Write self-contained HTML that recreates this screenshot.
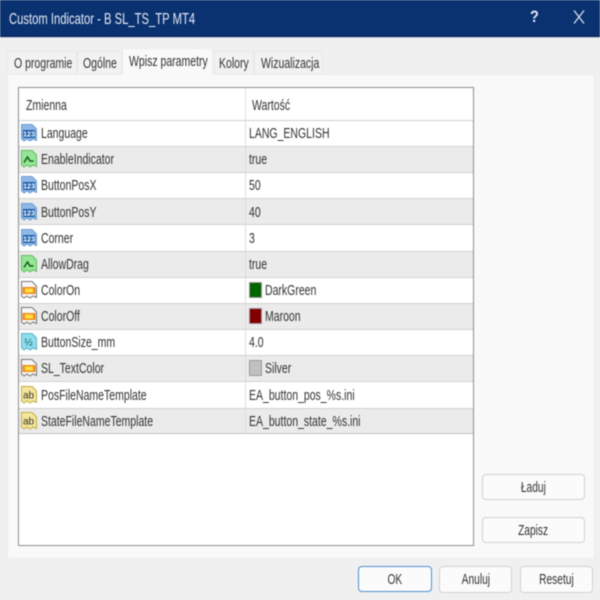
<!DOCTYPE html>
<html><head><meta charset="utf-8">
<style>
html,body{margin:0;padding:0;width:600px;height:600px;overflow:hidden;background:#f0f0f0;font-family:"Liberation Sans",sans-serif;color:#333}
#w{position:absolute;left:0;top:0;width:600px;height:600px;overflow:hidden;filter:blur(.4px)}
.a{position:absolute}
#t{left:0;top:0;width:600px;height:36px;background:#0a3271;border-bottom:1px solid #04204f}
#l{left:0;top:37px;width:600px;height:1px;background:#c9d3e6}
.s{position:absolute;white-space:nowrap;font-size:15px;line-height:16px;margin-top:1px;transform-origin:0 50%;transform:scaleX(.7)}
.tab{position:absolute;top:51px;height:23px;background:#f2f2f2;border:1px solid #e8e8e8;border-bottom:0;box-sizing:border-box}
.r{position:absolute;left:19px;width:454px;height:26px}
.g{background:#ebebeb}
.line{position:absolute;left:19px;width:454px;height:1px;background:#d0d0d0}
.btn{position:absolute;height:26px;box-sizing:border-box;background:#fbfbfb;border:1px solid #d2d2d2;border-radius:4px;text-align:center;font-size:15px;line-height:25px}
.btn span{display:inline-block;transform:scaleX(.68)}
svg{position:absolute}
.sw{position:absolute;left:249px;width:13px;height:16px;box-sizing:border-box;border:1px solid #9a9a9a}
</style></head><body><div id="w">
<div id="t" class="a"></div><div id="l" class="a"></div>
<div class="s" style="left:9px;top:11px;color:#e6ebf4;font-size:16px;transform:scaleX(.703)">Custom Indicator - B SL_TS_TP MT4</div>
<div class="s" style="left:530px;top:8px;color:#dfe6f2;font-size:17px;font-weight:bold;transform:scaleX(.85)">?</div>
<svg style="left:573px;top:9px" width="12" height="16"><path d="M1 1.5L11 14.5M11 1.5L1 14.5" stroke="#dfe6f2" stroke-width="1.2" fill="none"/></svg>

<div class="a" style="left:7px;top:74px;width:588px;height:485px;box-sizing:border-box;background:#f9f9f9;border:1px solid #ececec"></div>
<div class="tab" style="left:7px;width:70px"></div>
<div class="tab" style="left:77px;width:45px"></div>
<div class="tab" style="left:214px;width:40px"></div>
<div class="tab" style="left:254px;width:69px"></div>
<div class="a" style="left:122px;top:48px;width:91px;height:27px;background:#f9f9f9;border:1px solid #ececec;border-bottom:0;box-sizing:border-box"></div>
<div class="s" style="left:14px;top:55px">O programie</div>
<div class="s" style="left:83px;top:55px">Ogólne</div>
<div class="s" style="left:129px;top:53px">Wpisz parametry</div>
<div class="s" style="left:219px;top:55px">Kolory</div>
<div class="s" style="left:261px;top:55px">Wizualizacja</div>

<div class="a" style="left:18px;top:87px;width:456px;height:459px;box-sizing:border-box;background:#fff;border:1px solid #8e8e8e"></div>
<div class="a" style="left:245px;top:88px;width:1px;height:32px;background:#e2e2e2"></div>
<div class="s" style="left:26px;top:97px">Zmienna</div>
<div class="s" style="left:252px;top:97px">Wartość</div>

<div class="r g" style="top:146px"></div>
<div class="r g" style="top:198px"></div>
<div class="r g" style="top:251px"></div>
<div class="r g" style="top:303px"></div>
<div class="r g" style="top:355px"></div>
<div class="r g" style="top:408px"></div>
<div class="line" style="top:120px"></div><div class="line" style="top:146px"></div><div class="line" style="top:172px"></div><div class="line" style="top:198px"></div><div class="line" style="top:224px"></div><div class="line" style="top:251px"></div><div class="line" style="top:277px"></div><div class="line" style="top:303px"></div><div class="line" style="top:329px"></div><div class="line" style="top:355px"></div><div class="line" style="top:381px"></div><div class="line" style="top:408px"></div><div class="line" style="top:433px;background:#c4c4c4"></div>
<div class="a" style="left:245px;top:120px;width:1px;height:314px;background:#dcdcdc"></div>

<!-- icons -->
<svg style="left:21px;top:124px" width="16" height="18"><path d="M.5 .5H11L15.500 5V16.500L12 15L9 17L6 15L3 17L.5 15Z" fill="#8fb8e6" stroke="#6f9fd4"/><rect x="2" y="6" width="12" height="8" fill="#1f5fa8"/><text x="8" y="12.500" font-size="7" font-weight="bold" fill="#fff" text-anchor="middle" font-family="Liberation Sans">123</text></svg>
<svg style="left:21px;top:150px" width="16" height="18"><path d="M.5 .5H11L15.500 5V16.500L12 15L9 17L6 15L3 17L.5 15Z" fill="#93e693" stroke="#66bb66"/><path d="M3 12.500L6.500 7L9 11H12.500" stroke="#13591c" stroke-width="1.500" fill="none"/></svg>
<svg style="left:21px;top:176px" width="16" height="18"><path d="M.5 .5H11L15.500 5V16.500L12 15L9 17L6 15L3 17L.5 15Z" fill="#8fb8e6" stroke="#6f9fd4"/><rect x="2" y="6" width="12" height="8" fill="#1f5fa8"/><text x="8" y="12.500" font-size="7" font-weight="bold" fill="#fff" text-anchor="middle" font-family="Liberation Sans">123</text></svg>
<svg style="left:21px;top:203px" width="16" height="18"><path d="M.5 .5H11L15.500 5V16.500L12 15L9 17L6 15L3 17L.5 15Z" fill="#8fb8e6" stroke="#6f9fd4"/><rect x="2" y="6" width="12" height="8" fill="#1f5fa8"/><text x="8" y="12.500" font-size="7" font-weight="bold" fill="#fff" text-anchor="middle" font-family="Liberation Sans">123</text></svg>
<svg style="left:21px;top:229px" width="16" height="18"><path d="M.5 .5H11L15.500 5V16.500L12 15L9 17L6 15L3 17L.5 15Z" fill="#8fb8e6" stroke="#6f9fd4"/><rect x="2" y="6" width="12" height="8" fill="#1f5fa8"/><text x="8" y="12.500" font-size="7" font-weight="bold" fill="#fff" text-anchor="middle" font-family="Liberation Sans">123</text></svg>
<svg style="left:21px;top:255px" width="16" height="18"><path d="M.5 .5H11L15.500 5V16.500L12 15L9 17L6 15L3 17L.5 15Z" fill="#93e693" stroke="#66bb66"/><path d="M3 12.500L6.500 7L9 11H12.500" stroke="#13591c" stroke-width="1.500" fill="none"/></svg>
<svg style="left:21px;top:281px" width="16" height="18"><path d="M.5 .5H11L15.500 5V16.500L12 15L9 17L6 15L3 17L.5 15Z" fill="#f6f6f6" stroke="#777"/><rect x="1.500" y="6" width="13" height="7" fill="#f08a1e"/><rect x="4" y="7.500" width="8" height="4" fill="#ffe040"/></svg>
<svg style="left:21px;top:307px" width="16" height="18"><path d="M.5 .5H11L15.500 5V16.500L12 15L9 17L6 15L3 17L.5 15Z" fill="#f6f6f6" stroke="#777"/><rect x="1.500" y="6" width="13" height="7" fill="#f08a1e"/><rect x="4" y="7.500" width="8" height="4" fill="#ffe040"/></svg>
<svg style="left:21px;top:333px" width="16" height="18"><path d="M.5 .5H11L15.500 5V16.500L12 15L9 17L6 15L3 17L.5 15Z" fill="#8fdcea" stroke="#58b4c8"/><text x="7.500" y="12.500" font-size="10" fill="#0f5a78" text-anchor="middle" font-family="Liberation Sans">½</text></svg>
<svg style="left:21px;top:359px" width="16" height="18"><path d="M.5 .5H11L15.500 5V16.500L12 15L9 17L6 15L3 17L.5 15Z" fill="#f6f6f6" stroke="#777"/><rect x="1.500" y="6" width="13" height="7" fill="#f08a1e"/><rect x="4" y="7.500" width="8" height="4" fill="#ffe040"/></svg>
<svg style="left:21px;top:386px" width="16" height="18"><path d="M.5 .5H11L15.500 5V16.500L12 15L9 17L6 15L3 17L.5 15Z" fill="#f4e69a" stroke="#c4ae4a"/><text x="7.500" y="12.500" font-size="10" fill="#333" text-anchor="middle" font-family="Liberation Sans">ab</text></svg>
<svg style="left:21px;top:412px" width="16" height="18"><path d="M.5 .5H11L15.500 5V16.500L12 15L9 17L6 15L3 17L.5 15Z" fill="#f4e69a" stroke="#c4ae4a"/><text x="7.500" y="12.500" font-size="10" fill="#333" text-anchor="middle" font-family="Liberation Sans">ab</text></svg>

<!-- names -->
<div class="s" style="left:41px;top:125px">Language</div>
<div class="s" style="left:41px;top:151px">EnableIndicator</div>
<div class="s" style="left:41px;top:177px">ButtonPosX</div>
<div class="s" style="left:41px;top:204px">ButtonPosY</div>
<div class="s" style="left:41px;top:230px">Corner</div>
<div class="s" style="left:41px;top:256px">AllowDrag</div>
<div class="s" style="left:41px;top:282px">ColorOn</div>
<div class="s" style="left:41px;top:308px">ColorOff</div>
<div class="s" style="left:41px;top:334px">ButtonSize_mm</div>
<div class="s" style="left:41px;top:360px">SL_TextColor</div>
<div class="s" style="left:41px;top:387px">PosFileNameTemplate</div>
<div class="s" style="left:41px;top:413px">StateFileNameTemplate</div>

<!-- values -->
<div class="s" style="left:249px;top:125px">LANG_ENGLISH</div>
<div class="s" style="left:249px;top:151px">true</div>
<div class="s" style="left:249px;top:177px">50</div>
<div class="s" style="left:249px;top:204px">40</div>
<div class="s" style="left:249px;top:230px">3</div>
<div class="s" style="left:249px;top:256px">true</div>
<div class="sw" style="top:282px;background:#006400"></div>
<div class="s" style="left:265px;top:282px">DarkGreen</div>
<div class="sw" style="top:308px;background:#800000"></div>
<div class="s" style="left:265px;top:308px">Maroon</div>
<div class="s" style="left:249px;top:334px">4.0</div>
<div class="sw" style="top:360px;background:#c0c0c0"></div>
<div class="s" style="left:265px;top:360px">Silver</div>
<div class="s" style="left:249px;top:387px">EA_button_pos_%s.ini</div>
<div class="s" style="left:249px;top:413px">EA_button_state_%s.ini</div>

<!-- buttons -->
<div class="btn" style="left:482px;top:474px;width:103px"><span>Ładuj</span></div>
<div class="btn" style="left:482px;top:517px;width:103px"><span>Zapisz</span></div>
<div class="btn" style="left:358px;top:566px;width:74px;border:1px solid #4f8fcf;line-height:26px"><span>OK</span></div>
<div class="btn" style="left:439px;top:566px;width:73px;height:27px;line-height:26px"><span>Anuluj</span></div>
<div class="btn" style="left:520px;top:566px;width:73px;height:27px;line-height:26px"><span>Resetuj</span></div>
</div></body></html>
